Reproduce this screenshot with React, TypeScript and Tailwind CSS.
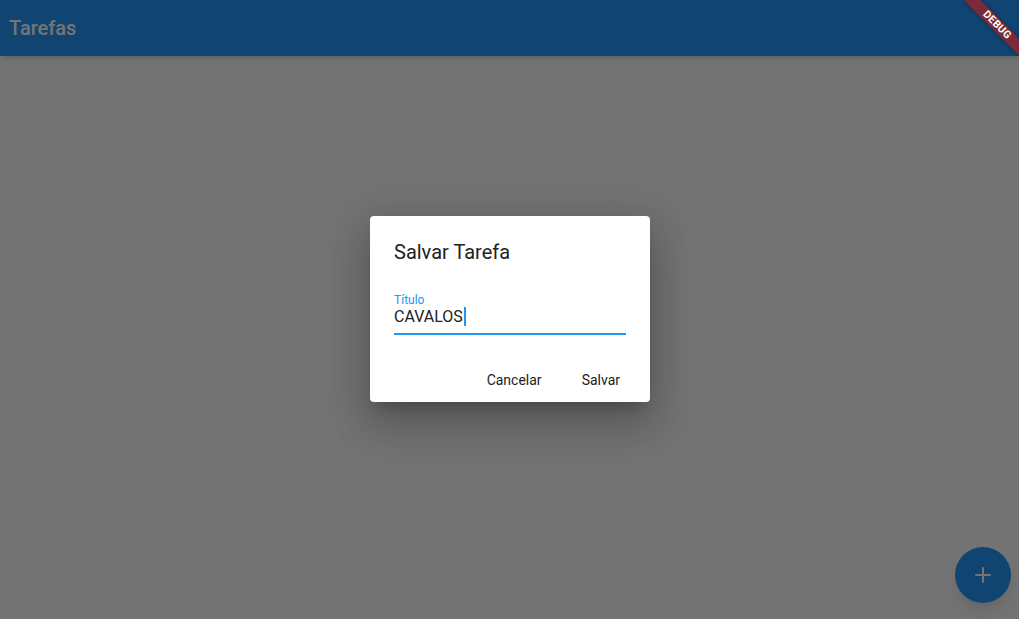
import { Plus } from "lucide-react";

const font = { fontFamily: "Roboto, 'Noto Sans', sans-serif" };

export default function App() {
  return (
    <div className="relative h-[619px] w-[1019px] overflow-hidden bg-[#fafafa]" style={font}>
      {/* App bar */}
      <header className="flex h-14 items-center bg-[#2196f3] px-[9px] shadow-md">
        <h1 className="text-[20px] font-medium text-white">Tarefas</h1>
      </header>

      {/* FAB */}
      <button className="absolute bottom-4 right-2 flex size-14 items-center justify-center rounded-full bg-[#2196f3] text-white shadow-lg">
        <Plus size={24} strokeWidth={2} />
      </button>

      {/* Barrier */}
      <div className="absolute inset-0 bg-black/[0.54]" />

      {/* Dialog */}
      <div className="absolute left-[370px] top-[216px] w-[280px] rounded bg-white shadow-[0_11px_15px_-7px_rgba(0,0,0,0.2),0_24px_38px_3px_rgba(0,0,0,0.14),0_9px_46px_8px_rgba(0,0,0,0.12)]">
        <div className="px-6 pt-[23px] text-[20px] leading-[26px] text-[#212121]">Salvar Tarefa</div>
        <div className="px-6 pt-[28px]">
          <div className="border-b-2 border-[#2196f3] pb-[7px]">
            <div className="text-[12px] leading-[14px] text-[#2196f3]">Título</div>
            <div className="flex items-center text-[16px] leading-[18px] text-[#212121]">
              CAVALOS
              <span className="ml-[1px] inline-block h-[19px] w-[2px] bg-[#2196f3]" />
            </div>
          </div>
        </div>
        <div className="flex justify-end gap-2 pb-[4px] pl-2 pr-[14px] pt-[27px]">
          <button className="h-9 min-w-16 px-4 text-[14px] text-[#212121]">Cancelar</button>
          <button className="h-9 min-w-16 px-4 text-[14px] text-[#212121]">Salvar</button>
        </div>
      </div>

      {/* Debug banner */}
      <div className="absolute left-[957px] top-[19px] flex h-3 w-20 rotate-45 items-center justify-center bg-[#b71c1c]/[0.63] text-[10.5px] font-bold leading-none tracking-[0.3px] text-white shadow-[0_0_3px_rgba(0,0,0,0.5)]">
        DEBUG
      </div>
    </div>
  );
}
